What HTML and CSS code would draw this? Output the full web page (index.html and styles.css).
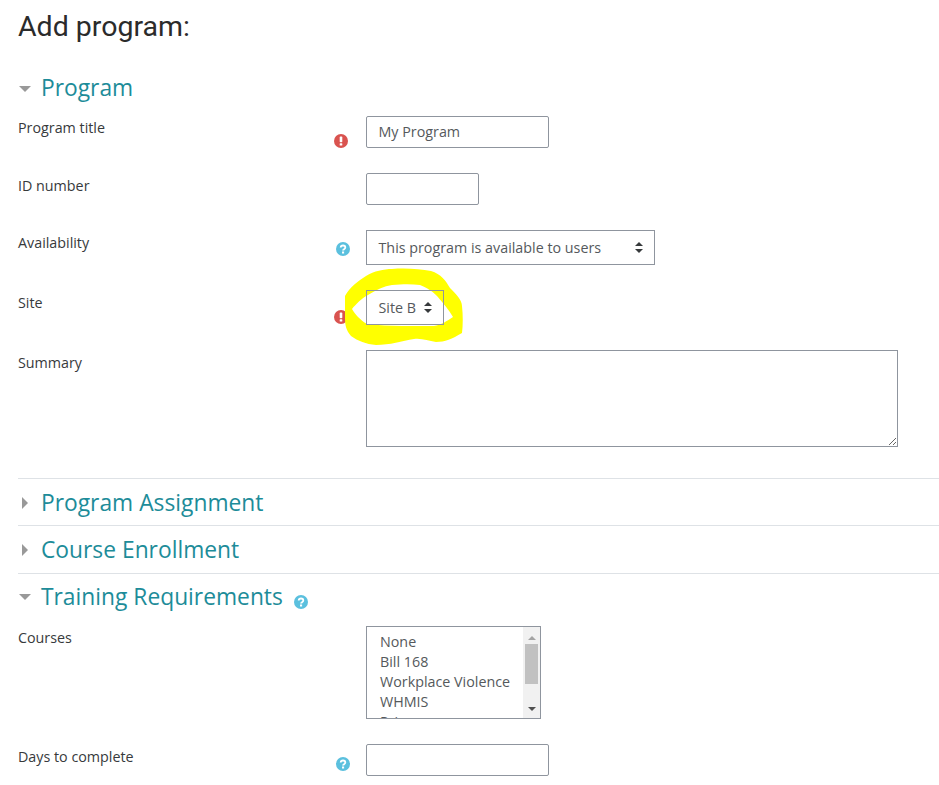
FILE: index.html
```html
<!DOCTYPE html>
<html lang="en">
<head>
  <meta charset="UTF-8" />
  <title>Add program</title>
  <link rel="stylesheet" href="styles.css">
</head>
<body>
  <svg class="icon-defs" width="0" height="0" aria-hidden="true">
    <symbol id="icon-required" viewBox="0 0 14 14">
      <circle cx="7" cy="7" r="7" fill="#d9534f" />
      <rect x="5.7" y="2.6" width="2.6" height="5.6" rx="0.8" fill="#fff" />
      <rect x="5.7" y="9.2" width="2.6" height="2.4" rx="0.6" fill="#fff" />
    </symbol>
    <symbol id="icon-help" viewBox="0 0 14 14">
      <circle cx="7" cy="7" r="7" fill="#5bc0de" />
      <path d="M4.7 5.5C4.8 4.2 5.8 3.5 7 3.5c1.300 0 2.300.8 2.300 1.900 0 1.800-2.300 1.700-2.300 3.200" fill="none" stroke="#fff" stroke-width="1.800" />
      <rect x="6" y="9.500" width="2.100" height="2" fill="#fff" />
    </symbol>
  </svg>

  <main class="page">
    <h2 class="page-title">Add program:</h2>

    <section class="group open first">
      <h3 class="group-head"><span class="caret-down"></span>Program</h3>
      <div class="rows">
        <div class="row">
          <label class="row-label tight-label">Program title</label>
          <svg class="icon"><use href="#icon-required" /></svg>
          <input class="field title-field" type="text" value="My Program">
        </div>
        <div class="row">
          <label class="row-label">ID number</label>
          <span></span>
          <input class="field id-field" type="text">
        </div>
        <div class="row">
          <label class="row-label">Availability</label>
          <svg class="icon icon-avail"><use href="#icon-help" /></svg>
          <div class="fake-select">This program is available to users<span class="updown"></span></div>
        </div>
        <div class="row">
          <label class="row-label">Site</label>
          <svg class="icon icon-site"><use href="#icon-required" /></svg>
          <div class="site-wrap">
            <svg class="scribble" viewBox="340 265 125 85" aria-hidden="true">
              <path fill="#ffff00" fill-rule="evenodd" d="M345 296C350 287 358 281 366 276C374 271 384 269 392 269C406 268 420 269 431 271C441 274 446 281 450 288C456 294 462 300 462 306C463 315 463 325 462 333C452 339 445 342 436 342C428 341 422 338 414 339C402 341 390 345 376 345C366 344 358 341 351 336C346 330 345 325 345 318Z M352 309C356 304 362 298 368 295C376 290 384 286 392 285C403 284 412 284 420 285C428 288 433 292 437 296C443 303 449 310 453 317C447 321 441 325 434 326C424 326 412 326 402 326C390 326 378 325 367 324C360 320 355 314 352 309Z" />
            </svg>
            <div class="fake-select site-select">Site B<span class="updown"></span></div>
          </div>
        </div>
        <div class="row">
          <label class="row-label">Summary</label>
          <span></span>
          <textarea class="field summary-field"></textarea>
        </div>
      </div>
    </section>

    <section class="group">
      <h3 class="group-head"><span class="caret-right"></span>Program Assignment</h3>
    </section>
    <section class="group">
      <h3 class="group-head"><span class="caret-right"></span>Course Enrollment</h3>
    </section>

    <section class="group open">
      <h3 class="group-head"><span class="caret-down"></span>Training Requirements<svg class="icon head-icon"><use href="#icon-help" /></svg></h3>
      <div class="rows">
        <div class="row">
          <label class="row-label tight-label">Courses</label>
          <span></span>
          <div class="listbox">
            <ul class="listbox-items">
              <li>None</li>
              <li>Bill 168</li>
              <li>Workplace Violence</li>
              <li>WHMIS</li>
              <li>Privacy</li>
            </ul>
            <div class="scrollbar">
              <span class="arrow-up"></span>
              <span class="thumb"></span>
              <span class="arrow-down"></span>
            </div>
          </div>
        </div>
        <div class="row">
          <label class="row-label">Days to complete</label>
          <svg class="icon icon-days"><use href="#icon-help" /></svg>
          <input class="field days-field" type="text">
        </div>
      </div>
    </section>
  </main>
</body>
</html>
```

FILE: styles.css
```css
:root {
  --teal: #1d8c99;
  --text: #373a3c;
  --field-text: #55595c;
  --field-border: #8f959e;
  --rule: #dee2e6;
}

html, body {
  height: 785px;
  overflow: hidden;
}

body {
  margin: 0;
  background: #fff;
  font-family: "Open Sans", sans-serif;
  font-size: 14.3px;
  color: var(--text);
}

.icon-defs {
  display: block;
  height: 0;
}

.page {
  padding: 0 0 0 18px;
}

.page-title {
  margin: 0;
  padding-top: 9px;
  font-family: Roboto, sans-serif;
  font-size: 28.5px;
  font-weight: 400;
  line-height: 36px;
  color: #2b2b2b;
}

.group {
  border-top: 1px solid var(--rule);
  padding: 8px 0 7.4px;
}

.group.open {
  padding: 7px 0 0;
}

.group.open.first {
  border-top: 0;
  padding: 27px 0 31px;
}

.group-head {
  display: flex;
  align-items: center;
  margin: 0;
  font-size: 22.8px;
  font-weight: 400;
  line-height: 31px;
  color: var(--teal);
}

.caret-down,
.caret-right {
  display: block;
  width: 0;
  height: 0;
  flex: none;
}

.caret-down {
  margin: 2px 10px 0 1px;
  border-left: 6.500px solid transparent;
  border-right: 6.500px solid transparent;
  border-top: 6.500px solid #999;
}

.caret-right {
  margin: 1px 13px 0 4px;
  border-top: 6px solid transparent;
  border-bottom: 6px solid transparent;
  border-left: 6.500px solid #999;
}

.rows {
  display: flex;
  flex-direction: column;
  gap: 25px;
  padding-top: 13px;
}

.group:last-child .rows {
  padding-top: 14px;
}

.row {
  display: grid;
  grid-template-columns: 316px 32px 1fr;
  align-items: start;
}

.row-label {
  line-height: 20px;
  padding-top: 3px;
}

.tight-label {
  padding-top: 2px;
}

.icon {
  width: 14px;
  height: 14px;
  margin-top: 18px;
}

.icon-avail {
  margin-left: 2px;
  margin-top: 12px;
}

.icon-site {
  margin-top: 19.5px;
}

.icon-days {
  margin-left: 2px;
  margin-top: 13px;
}

.head-icon {
  margin: 12px 0 0 11px;
}

.field {
  display: block;
  box-sizing: border-box;
  margin: 0;
  padding: 0 11.5px 1px;
  border: 1px solid var(--field-border);
  border-radius: 2px;
  background: #fff;
  font-family: inherit;
  font-size: 14.3px;
  color: var(--field-text);
  outline: none;
}

.title-field {
  width: 183px;
  height: 32px;
}

.id-field {
  width: 113px;
  height: 32px;
}

.days-field {
  width: 183px;
  height: 32px;
}

.summary-field {
  width: 532px;
  height: 97px;
  border-radius: 0;
}

.fake-select {
  display: flex;
  align-items: center;
  justify-content: space-between;
  box-sizing: border-box;
  width: 289px;
  height: 35px;
  padding: 0 11px 0 11.5px;
  border: 1px solid var(--field-border);
  color: var(--field-text);
}

.site-wrap {
  position: relative;
}

.site-select {
  position: relative;
  width: 78px;
}

.scribble {
  position: absolute;
  left: -26px;
  top: -25px;
  width: 125px;
  height: 85px;
}

.updown {
  position: relative;
  display: block;
  flex: none;
  width: 8px;
  height: 11px;
}

.updown::before,
.updown::after {
  content: "";
  position: absolute;
  left: 0;
  border-left: 4px solid transparent;
  border-right: 4px solid transparent;
}

.updown::before {
  top: 0;
  border-bottom: 4.500px solid #373a3c;
}

.updown::after {
  bottom: 0;
  border-top: 4.500px solid #373a3c;
}

.listbox {
  display: flex;
  box-sizing: border-box;
  width: 175px;
  height: 93px;
  border: 1px solid var(--field-border);
  overflow: hidden;
}

.listbox-items {
  flex: 1;
  margin: 0;
  padding: 5px 0 0 13px;
  list-style: none;
  line-height: 20px;
  color: var(--field-text);
}

.scrollbar {
  display: flex;
  flex-direction: column;
  align-items: center;
  flex: none;
  width: 17px;
  background: #f1f1f1;
}

.thumb {
  flex: none;
  width: 13px;
  height: 40px;
  margin-top: 4px;
  background: #c1c1c1;
}

.arrow-up,
.arrow-down {
  display: block;
  flex: none;
  width: 0;
  height: 0;
  border-left: 4px solid transparent;
  border-right: 4px solid transparent;
}

.arrow-up {
  margin-top: 9px;
  border-bottom: 4px solid #a3a3a3;
}

.arrow-down {
  margin-top: 23px;
  border-top: 4px solid #505050;
}
```
